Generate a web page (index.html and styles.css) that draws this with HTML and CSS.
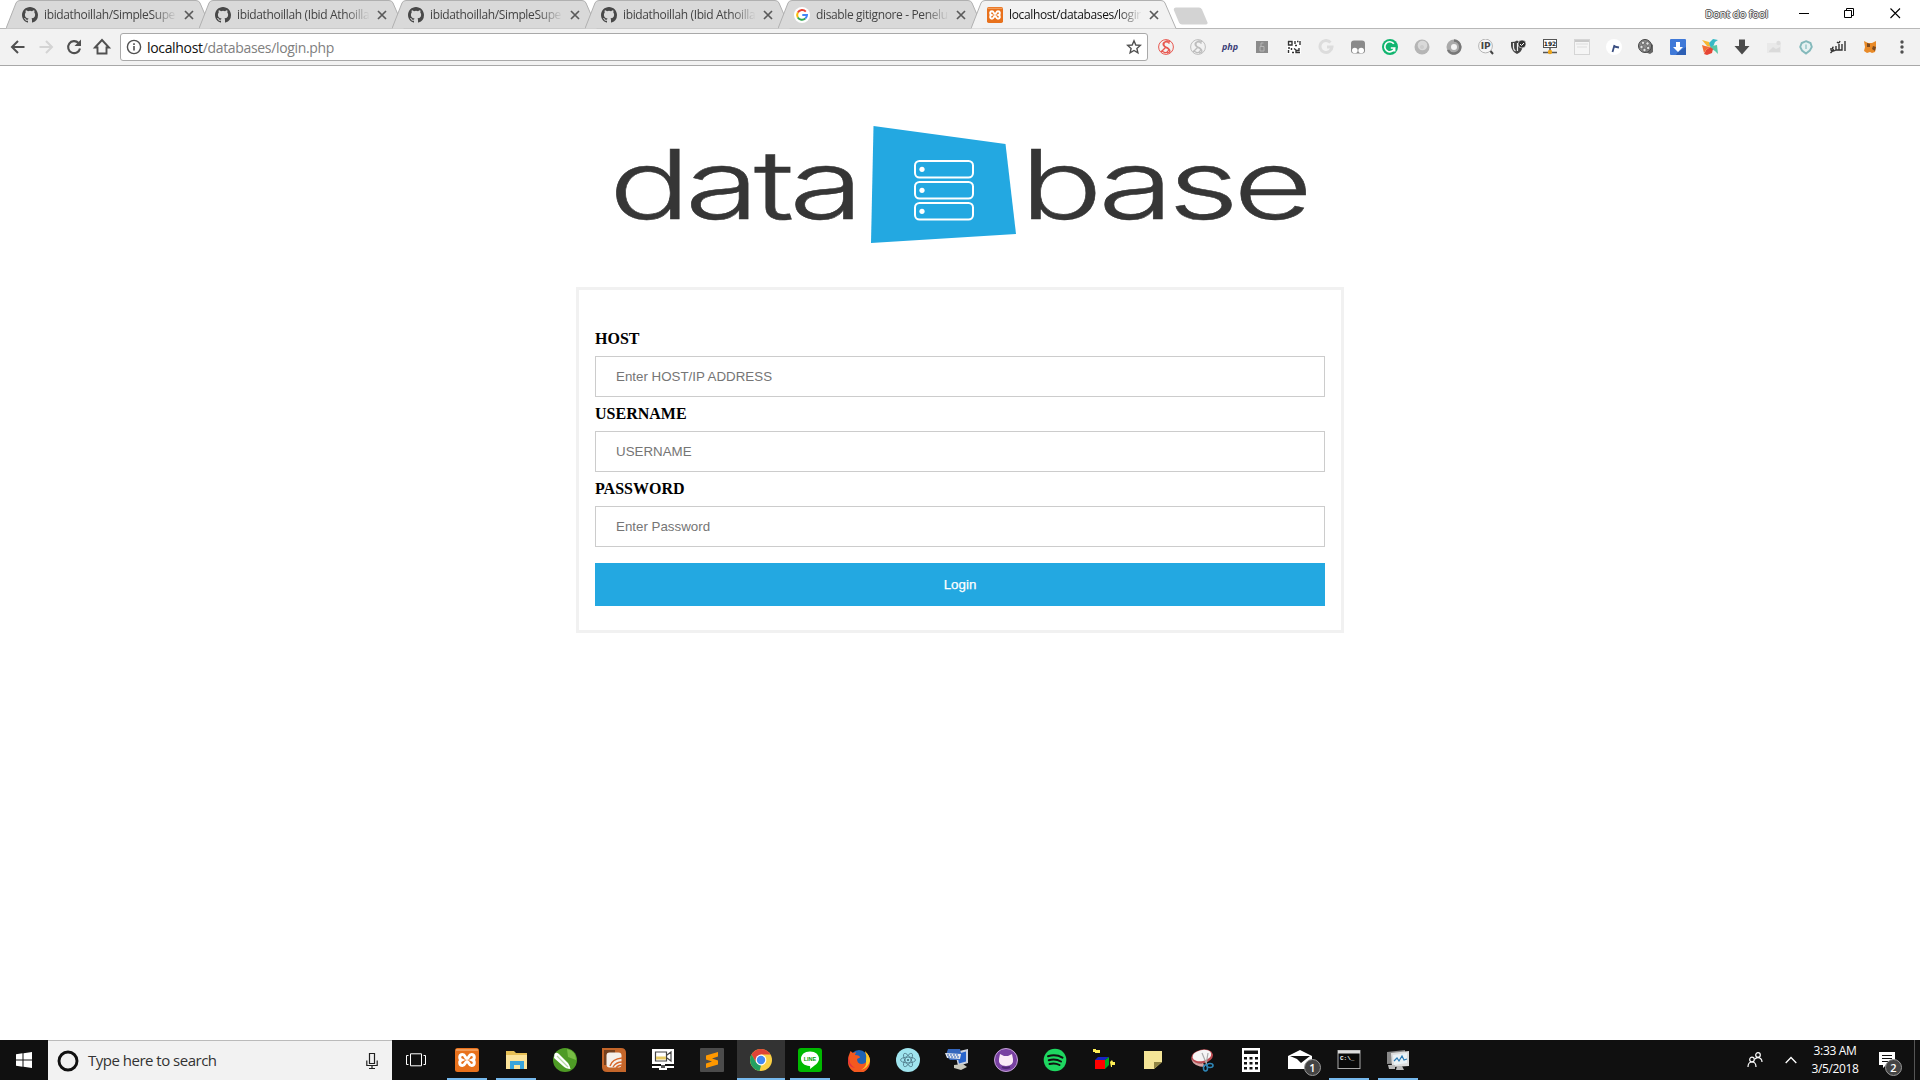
FILE: index.html
```html
<!DOCTYPE html>
<html lang="en">
<head>
<meta charset="utf-8">
<title>Database login</title>
<link rel="stylesheet" href="styles.css">
</head>
<body>
<svg class="defs" width="0" height="0">
  <symbol id="cat" viewBox="0 0 16 16"><path fill="#484848" fill-rule="evenodd" d="M8 0C3.58 0 0 3.58 0 8c0 3.54 2.29 6.53 5.47 7.59.4.07.55-.17.55-.38 0-.19-.01-.82-.01-1.49-2.01.37-2.53-.49-2.69-.94-.09-.23-.48-.94-.82-1.13-.28-.15-.68-.52-.01-.53.63-.01 1.08.58 1.23.82.72 1.21 1.87.87 2.33.66.07-.52.28-.87.51-1.07-1.78-.2-3.64-.89-3.64-3.95 0-.87.31-1.59.82-2.15-.08-.2-.36-1.02.08-2.12 0 0 .67-.21 2.2.82a7.6 7.6 0 0 1 4 0c1.53-1.04 2.2-.82 2.2-.82.44 1.1.16 1.92.08 2.12.51.56.82 1.27.82 2.15 0 3.07-1.87 3.75-3.65 3.95.29.25.54.73.54 1.48 0 1.07-.01 1.93-.01 2.2 0 .21.15.46.55.38A8 8 0 0 0 16 8c0-4.42-3.58-8-8-8z"/></symbol>
  <symbol id="tabshape" viewBox="0 0 207 29"><path d="M0 28.5 L10 3 Q11 .5 14 .5 H190 Q193 .5 194 3 L205 28.5"/></symbol>
  <symbol id="x" viewBox="0 0 10 10"><path d="M1 1L9 9M9 1L1 9" stroke="#5a5a5a" stroke-width="1.7"/></symbol>
  <symbol id="xampp" viewBox="0 0 24 24"><rect width="24" height="24" rx="2.5" fill="#e8711c"/><path d="M1 2h22" stroke="#f5a86a" stroke-width="1.5"/><path d="M7.5 6.5C4 6.5 4 11 6.5 12C4 13 4 17.5 7.5 17.5C10.5 17.5 10 13.500 12 13.500S13.500 17.500 16.500 17.500C20 17.500 20 13 17.500 12C20 11 20 6.500 16.500 6.500C13.500 6.500 14 10.500 12 10.500S10.500 6.500 7.500 6.500Z" fill="none" stroke="#fff" stroke-width="3"/></symbol>
  <symbol id="swirl" viewBox="0 0 16 16"><circle cx="8" cy="8" r="7.400" fill="none" stroke="currentColor"/><path d="M11.500 4.500C8 1 3 4 6 7s6 2 4 5-6 1-6-1M12 3C8-1 3 6 8 8s5 6 1 6M3 13L8 8" fill="none" stroke="currentColor" stroke-width="1.300"/></symbol>
</svg>

<header class="tabs">
  <div class="tab"><svg class="shape"><use href="#tabshape"/></svg><svg class="fav"><use href="#cat"/></svg><span class="title">ibidathoillah/SimpleSuper</span><svg class="close"><use href="#x"/></svg></div>
  <div class="tab"><svg class="shape"><use href="#tabshape"/></svg><svg class="fav"><use href="#cat"/></svg><span class="title">ibidathoillah (Ibid Athoillah)</span><svg class="close"><use href="#x"/></svg></div>
  <div class="tab"><svg class="shape"><use href="#tabshape"/></svg><svg class="fav"><use href="#cat"/></svg><span class="title">ibidathoillah/SimpleSuper</span><svg class="close"><use href="#x"/></svg></div>
  <div class="tab"><svg class="shape"><use href="#tabshape"/></svg><svg class="fav"><use href="#cat"/></svg><span class="title">ibidathoillah (Ibid Athoillah)</span><svg class="close"><use href="#x"/></svg></div>
  <div class="tab"><svg class="shape"><use href="#tabshape"/></svg><svg class="fav" viewBox="0 0 16 16"><circle cx="8" cy="8" r="8" fill="#fff"/><g fill="none" stroke-width="2"><path d="M11.800 4.600A5 5 0 0 0 3.800 5.600" stroke="#ea4335"/><path d="M3.800 5.600a5 5 0 0 0 0 4.800" stroke="#fbbc05"/><path d="M3.800 10.400a5 5 0 0 0 7.500 1.200" stroke="#34a853"/><path d="M11.300 11.600A5 5 0 0 0 13 8H8.300" stroke="#4285f4"/></g></svg><span class="title">disable gitignore - Penelu</span><svg class="close"><use href="#x"/></svg></div>
  <div class="tab active"><svg class="shape"><use href="#tabshape"/></svg><svg class="fav"><use href="#xampp"/></svg><span class="title">localhost/databases/login</span><svg class="close"><use href="#x"/></svg></div>
  <svg class="newtab" viewBox="0 0 36 18"><path d="M3 .5H26Q28 .5 29 2.500L34.500 15.500Q35 17.500 33 17.500H9Q7 17.500 6 15.500L.8 3Q.5 .5 3 .5Z" fill="#d3d3d3"/></svg>
  <span class="profile">Dont do fool</span>
  <svg class="wctl" viewBox="0 0 46 26"><path d="M18 13.500h10" stroke="#000"/></svg>
  <svg class="wctl" viewBox="0 0 46 26"><path d="M17.500 10.500h7v7h-7zM19.500 10.500v-2h7v7h-2" fill="none" stroke="#000"/></svg>
  <svg class="wctl" viewBox="0 0 46 26"><path d="M17.500 8.500l9.500 9.500M27 8.500l-9.500 9.500" stroke="#000" stroke-width="1.100"/></svg>
</header>

<nav class="toolbar">
  <svg class="nav" viewBox="0 0 28 28"><path d="M20.500 14H8.500M14 8L8 14l6 6" fill="none" stroke="#505050" stroke-width="2"/></svg>
  <svg class="nav" viewBox="0 0 28 28"><path d="M7.500 14h12M14 8l6 6-6 6" fill="none" stroke="#d4d4d4" stroke-width="2"/></svg>
  <svg class="nav" viewBox="0 0 28 28"><path d="M18.500 10A6 6 0 1 0 20 15.500" fill="none" stroke="#505050" stroke-width="2.100"/><path d="M21 6.500v6.500h-6.500z" fill="#505050"/></svg>
  <svg class="nav" viewBox="0 0 28 28"><path d="M7 14.500l7-7.500 7 7.500h-2.500v6h-9v-6z" fill="none" stroke="#505050" stroke-width="1.900"/></svg>
  <div class="omnibox">
    <svg class="info" viewBox="0 0 16 16"><circle cx="8" cy="8" r="6.600" fill="none" stroke="#505050" stroke-width="1.400"/><path d="M8 7v4.500M8 4.300v1.600" stroke="#505050" stroke-width="1.600"/></svg>
    <span class="url"><b>localhost</b>/databases/login.php</span>
    <svg class="star" viewBox="0 0 16 16"><path d="M8 1.800l1.800 4.200 4.500.4-3.400 3 1 4.400L8 11.500l-3.900 2.300 1-4.400-3.400-3L6.200 6z" fill="none" stroke="#505050" stroke-width="1.400"/></svg>
  </div>
  <div class="exts">
    <svg class="red" viewBox="0 0 16 16"><use href="#swirl"/></svg>
    <svg class="gray" viewBox="0 0 16 16"><use href="#swirl"/></svg>
    <span class="php">php</span>
    <svg viewBox="0 0 16 16"><rect x="2" y="2" width="12" height="12" fill="#8b8b8b"/><path d="M9.500 4H7v3M6 7.500h4v4.500H6z" stroke="#b5b5b5" fill="none"/></svg>
    <svg viewBox="0 0 16 16"><rect x="1" y="1" width="14" height="14" fill="#fff"/><path d="M2.500 2.500h3.500v3.500h-3.500zM9 2v3M11 2.500h1.500M14 2v4M9 6.500h2M2 9h2M5.500 9v2M2.500 11v3M6 13.500h2M8 9.500l2 1.500M13 9v2.500h-3v2h4" fill="none" stroke="#333" stroke-width="1.400"/></svg>
    <svg viewBox="0 0 16 16"><path d="M12.500 3.500A6 6 0 1 0 14 8H9" fill="none" stroke="#dcdcdc" stroke-width="3"/></svg>
    <svg viewBox="0 0 16 16"><rect x="1" y="1.500" width="14" height="13" rx="3" fill="#8a8a8a"/><circle cx="4.800" cy="11.500" r="2.800" fill="#fff"/><circle cx="11.200" cy="11.500" r="2.800" fill="#fff"/></svg>
    <svg viewBox="0 0 16 16"><circle cx="8" cy="8" r="8" fill="#11b56f"/><path d="M11.800 4.800A5 5 0 1 0 12.600 9H8.800M12.600 9v3.500" fill="none" stroke="#fff" stroke-width="1.700"/></svg>
    <svg viewBox="0 0 16 16"><circle cx="8" cy="8" r="7.500" fill="#b5b5b5"/><circle cx="8.500" cy="6.500" r="4.800" fill="#d9d9d9"/><circle cx="8" cy="8" r="2" fill="#ccc"/></svg>
    <svg viewBox="0 0 16 16"><circle cx="8" cy="8" r="7.500" fill="#aaa"/><path d="M8 1.500A6.500 6.500 0 1 1 2 11" stroke="#777" stroke-width="2.500" fill="none"/><circle cx="8" cy="8" r="3" fill="#f4f4f4"/></svg>
    <svg viewBox="0 0 16 16"><circle cx="7.500" cy="7" r="6.900" fill="#f6f6f6" stroke="#b5b5b5"/><text x="7.700" y="9.800" class="ip">IP</text><path d="M12.500 12l2.500 3" stroke="#444" stroke-width="2"/></svg>
    <svg viewBox="0 0 16 16"><path d="M1 3Q5 3 7 1.500Q9 3 12.500 3V8Q12 13 7 15Q1.500 12 1 7z" fill="#444"/><path d="M3.500 4v4.500q0 2.500 2 3.500M7.500 4v8" stroke="#eee" fill="none" stroke-width="1.200"/><circle cx="12" cy="5" r="4" fill="#333" stroke="#f2f2f2" stroke-width=".6"/><path d="M10 5l1.500 1.500L14 4" stroke="#fff" fill="none"/></svg>
    <svg viewBox="0 0 16 16"><rect x="1.500" y=".5" width="13" height="8" fill="#fff" stroke="#555"/><text x="8" y="7" class="num">192</text><path d="M8 9v4M1 13.500h14" stroke="#555" stroke-width="1.500"/><circle cx="8" cy="13" r="2.200" fill="#eda51b"/></svg>
    <svg viewBox="0 0 16 16"><rect x=".5" y=".5" width="15" height="15" fill="#f5f5f5" stroke="#d5d5d5"/><path d="M1 2h14" stroke="#c9c9c9" stroke-width="2"/><path d="M2 5h12M3 8h10" stroke="#ddd"/></svg>
    <svg viewBox="0 0 16 16"><circle cx="8" cy="8" r="8" fill="#fff"/><path d="M8.500 6L6.500 13M8 7.500l5 1" stroke="#3b4f82" stroke-width="1.800"/></svg>
    <svg viewBox="0 0 16 16"><path d="M9 1l6 5v7l-3 2-5-2z" fill="#666"/><circle cx="7" cy="7" r="6.500" fill="#8a8a8a" stroke="#444"/><g fill="#e2e2e2" stroke="#555" stroke-width=".7"><circle cx="5" cy="3.800" r="1.700"/><circle cx="9.500" cy="4.500" r="1.700"/><circle cx="3.500" cy="8" r="1.700"/><circle cx="6.500" cy="11" r="1.700"/><circle cx="10.200" cy="9" r="1.700"/></g></svg>
    <svg viewBox="0 0 16 16"><rect width="16" height="16" rx="1" fill="#3f79d8"/><path d="M8 13l8-5v8H6z" fill="#2d5fb4"/><path d="M6 3h4v5h3l-5 5-5-5h3z" fill="#fff"/></svg>
    <svg viewBox="0 0 16 16"><path d="M0 1l7 2 2 5-4-1z" fill="#f7b731"/><path d="M7 4l4-4 5 1-3 2-2 5-2 1z" fill="#36b9c6"/><path d="M10 7l5-1 1 9-3-3-5-3z" fill="#56c6a6"/><path d="M2 15l2-4 4-3 3 2-1 4-5 2z" fill="#e64535"/><path d="M0 6l3 1 5 1-4 3-2 3z" fill="#f26c34"/></svg>
    <svg viewBox="0 0 16 16"><path d="M5 .5h6V7h4.500L8 15.500.5 7H5z" fill="#4b4b4b"/></svg>
    <svg viewBox="0 0 16 16"><rect x="1" y="4" width="14" height="10" fill="#e9e9e9"/><path d="M3 12l4-4 3 2 4-2v5H3z" fill="#dadada"/><circle cx="12.500" cy="4" r="2.200" fill="#ddd"/></svg>
    <svg viewBox="0 0 16 16"><path d="M8 2.200l4.500 1.800 1.300 4-2 3.500L8 14.500l-4-3L2.200 8l1.500-4z" fill="#e6f2f2" stroke="#84b9bb" stroke-width="1.900"/><path d="M8 5.500v4.500" stroke="#73b2b4"/></svg>
    <svg viewBox="0 0 16 16"><path d="M15 2v10M12 5v6H9V5M9 11H6V7M6 11q-3 2-5 0V9M3.500 8q-2 1 0 3l-3 3M7 3q2 2 3-1" fill="none" stroke="#333" stroke-width="1.400"/></svg>
    <svg viewBox="0 0 16 16"><path d="M2 2l4 2h4l4-2v6l-1 5-3 1-2-1-3 1-3-2 1-4z" fill="#e88a28"/><path d="M5 4l3 1v3H5zM11 7l3 1-1 4-3-2z" fill="#7c4a20"/></svg>
    <svg viewBox="0 0 16 16"><g fill="#505050"><circle cx="8" cy="3" r="1.700"/><circle cx="8" cy="8" r="1.700"/><circle cx="8" cy="13" r="1.700"/></g></svg>
  </div>
</nav>

<main class="page">
  <svg class="logo" viewBox="0 0 704 120">
    <g class="word"><text x="1" y="95.500" textLength="249" lengthAdjust="spacingAndGlyphs">data</text><text x="412" y="95.500" textLength="287" lengthAdjust="spacingAndGlyphs">base</text></g>
    <path d="M265.500 3L397.500 21 408 111 263 120z" fill="#23a8e1"/>
    <g fill="none" stroke="#fff" stroke-width="2"><rect x="307" y="38" width="58" height="16.500" rx="4.500"/><rect x="307" y="59" width="58" height="16.500" rx="4.500"/><rect x="307" y="80" width="58" height="16.500" rx="4.500"/></g>
    <g fill="#fff"><circle cx="314" cy="46.300" r="2.600"/><circle cx="314" cy="67.300" r="2.600"/><circle cx="314" cy="88.300" r="2.600"/></g>
  </svg>
  <form class="login">
    <label for="host">HOST</label>
    <input id="host" type="text" placeholder="Enter HOST/IP ADDRESS">
    <label for="user">USERNAME</label>
    <input id="user" type="text" placeholder="USERNAME">
    <label for="pass">PASSWORD</label>
    <input id="pass" type="password" placeholder="Enter Password">
    <button type="button">Login</button>
  </form>
</main>

<footer class="taskbar">
  <div class="start"><svg width="16" height="16" viewBox="0 0 16 16"><path d="M0 2.200L6.500 1.300V7.500H0zM7.500 1.200L16 0V7.500H7.500zM0 8.500h6.500v6.200L0 13.800zM7.500 8.500H16V16L7.500 14.800z" fill="#fff"/></svg></div>
  <div class="search"><svg width="22" height="22" viewBox="0 0 22 22"><circle cx="11" cy="11" r="9" fill="none" stroke="#111" stroke-width="2.900"/></svg><span>Type here to search</span><svg class="mic" width="12" height="16" viewBox="0 0 12 16"><path d="M3.500.5h5v10h-5zM.8 7.500v5h10.400v-5M6 12.500v3M3 15.500h6" fill="none" stroke="#222" stroke-width="1.200"/></svg></div>
  <div class="view"><svg width="20" height="14" viewBox="0 0 20 14"><path d="M4.500.8h11v12h-11zM2.500 2.500h-2v9h2M17.500 2.500h2v9h-2" fill="none" stroke="#fff"/></svg></div>
  <div class="apps">
    <div class="app open"><svg viewBox="0 0 24 24"><use href="#xampp"/></svg></div>
    <div class="app open"><svg viewBox="0 0 24 24"><path d="M2 3h8l2 2h11v15H2z" fill="#e6bf55"/><path d="M2 7h21v14H2z" fill="#fbe39a"/><path d="M6 13h14v8h-4v-4h-6v4H6z" fill="#39a4dc"/></svg></div>
    <div class="app"><svg viewBox="0 0 24 24"><circle cx="12" cy="12" r="12" fill="#4e9b25"/><path d="M14 1q9 2 9 11l-8-3z" fill="#78bd45"/><path d="M1.500 6Q3 3.500 6 6l9 9q2 3 2.500 6Q13 21 10 18L1 10z" fill="#fff"/><path d="M4 8l11 11" stroke="#b6d9a2" stroke-width="1.200"/></svg></div>
    <div class="app"><svg viewBox="0 0 24 24"><path d="M0 0h19q5 0 5 5v19H5q-5 0-5-5z" fill="#c4662a"/><path d="M2 2h11v3H5v12H2z" fill="#75411f"/><rect x="4.500" y="4.500" width="15" height="15" rx="3" fill="#f4f0eb"/><path d="M8 18q2-7 12-8M11 19q3-5 9-5M14 20q2-3 6-3" fill="none" stroke="#d8682c" stroke-width="1.400"/></svg></div>
    <div class="app"><svg viewBox="0 0 24 24"><path d="M1 1h22v15H1zM10 16h4v4h-4zM8 20h8v2H8zM1 18h22v2H1z" fill="#fff"/><path d="M4.500 4h11v9h-11zM16 7l4-3v9l-4-3" fill="none" stroke="#444" stroke-width="1.200"/><path d="M5 10h10" stroke="#e7ca62" stroke-width="3"/><path d="M10 17h4v3h-4z" fill="#555"/></svg></div>
    <div class="app"><svg viewBox="0 0 24 24"><rect width="24" height="24" rx="1" fill="#4b4b4b"/><path d="M6 7.500L18 4v4.500l-6 2 6 2v4L6 20v-4.500l6-2-6-2z" fill="#ff9800"/></svg></div>
    <div class="app open current"><svg viewBox="0 0 24 24"><circle cx="12" cy="12" r="11" fill="#fbd044"/><path d="M2.500 6.500A11 11 0 0 1 21.500 6.500H12L7.200 14.700z" fill="#df4437"/><path d="M2.500 6.500L7.300 14.700 12 17.500l-1.500 5.400A11 11 0 0 1 2.500 6.500z" fill="#22a061"/><circle cx="12" cy="12" r="5.400" fill="#fff"/><circle cx="12" cy="12" r="4.200" fill="#4489f3"/></svg></div>
    <div class="app open"><svg viewBox="0 0 24 24"><rect width="24" height="24" rx="3" fill="#00b900"/><path d="M12 3.500c5.500 0 9 3.200 9 7.300 0 4-4.500 7-9 10.200.3-1.500.5-2.700-.5-2.900C6.500 17.700 3 15 3 10.800 3 6.700 6.500 3.500 12 3.500z" fill="#fff"/><text x="12" y="13.200" class="line">LINE</text></svg></div>
    <div class="app"><svg viewBox="0 0 24 24"><circle cx="12" cy="11" r="9" fill="#1f63b5"/><path d="M2 7l1.500-4L6 5l3-1-1 3q5 0 5 2.500l-3 1.500q0 5 5 5 6-1 5-8l-2-4q5.500 3.500 5 10a11 11 0 0 1-22 0Q1 9 2 7z" fill="#f4591f"/><path d="M18 3q5 5 5 10-2 7-9 9 6-3 5-9 1-5-1-10z" fill="#ffc928"/><path d="M2 7q-1 9 6 13-6-1-7-7z" fill="#e3313f"/></svg></div>
    <div class="app"><svg viewBox="0 0 24 24"><circle cx="12" cy="12" r="12" fill="#9fe4ee"/><g fill="none" stroke="#4c7787" stroke-width=".8"><ellipse cx="12" cy="12" rx="7.500" ry="2.900"/><ellipse cx="12" cy="12" rx="7.500" ry="2.900" transform="rotate(60 12 12)"/><ellipse cx="12" cy="12" rx="7.500" ry="2.900" transform="rotate(120 12 12)"/></g><circle cx="12" cy="12" r="1" fill="#3d6474"/></svg></div>
    <div class="app"><svg viewBox="0 0 24 24"><path d="M10 4l13-3v14l-10 3z" fill="#cdd3df"/><path d="M12 6l9-2.500v10l-7 2z" fill="#2864cc"/><path d="M3 1h12l1 4-1 7H5L1 7z" fill="#3567bd"/><path d="M0 5l16 1-1 5-13-1z" fill="#e5e8ee"/><path d="M2 7h12M3 9h11" stroke="#285db7" stroke-dasharray="2 1"/><path d="M9 17l9-1 4 3-6 3-7-2z" fill="#c8c8bd"/></svg></div>
    <div class="app"><svg viewBox="0 0 24 24"><circle cx="12" cy="12" r="11.500" fill="#7941a2" stroke="#c6a3d9"/><path d="M6 6l4 2h4l4-2 1 5q1 7-7 7T5 11z" fill="#fbeaf7"/><path d="M8 19q4 2 8 0" stroke="#4f2673" stroke-width="2" fill="none"/></svg></div>
    <div class="app"><svg viewBox="0 0 24 24"><circle cx="12" cy="12" r="11.300" fill="#1ed760"/><path d="M5 8.200Q13 6 19.500 9.600M5.800 12.200Q12.500 10.300 18 13.500M6.500 16Q12 14.500 16.500 17" fill="none" stroke="#111" stroke-width="2" stroke-linecap="round"/></svg></div>
    <div class="app"><svg viewBox="0 0 24 24"><path d="M3 12h10v9H3z" fill="#f00"/><path d="M3 12l3-3h11l-4 3z" fill="#1724c2"/><path d="M13 12l4-3v8l-4 4z" fill="#00aa24"/><path d="M1 1h3v1h4v3H3V4H1zM18 14l2-2 1 2h2v3h-3v2h-1z" fill="#ffef55"/></svg></div>
    <div class="app"><svg viewBox="0 0 24 24"><path d="M3 3h18v11l-8 7H3z" fill="#f4e597"/><path d="M13 14h8l-8 7z" fill="#908443"/></svg></div>
    <div class="app"><svg viewBox="0 0 24 24"><ellipse cx="12" cy="8.500" rx="11" ry="7" fill="#bc4b51" transform="rotate(-12 12 8)"/><ellipse cx="12" cy="7.500" rx="9.500" ry="5.500" fill="#f5f5f5" transform="rotate(-12 12 8)"/><path d="M1 11q6 6 12 4l2 4q-11 0-14-8z" fill="#d7a5a5"/><path d="M12 5l5 12M18 5l-2 12" stroke="#aaa" stroke-width="1.200"/><g fill="none" stroke="#2e87b8" stroke-width="1.600"><ellipse cx="15.500" cy="20" rx="2" ry="3"/><ellipse cx="20" cy="17.500" rx="3" ry="2"/></g></svg></div>
    <div class="app"><svg viewBox="0 0 24 24"><path d="M3 0h18v24H3z" fill="#fff"/><path d="M5 2.500h14v3.500H5zM5 9h3v2.500H5zM10.500 9h3v2.500h-3zM16 9h3v2.500h-3zM5 14h3v2.500H5zM10.500 14h3v2.500h-3zM16 14h3v2.500h-3zM5 19h3v2.500H5zM10.500 19h3v2.500h-3zM16 19h3v2.500h-3z" fill="#111"/></svg></div>
    <div class="app"><svg viewBox="0 0 24 24"><path d="M0 8l12-6 12 6v13H0z" fill="#fff"/><path d="M2 8h20l-9 7-4-4z" fill="#111"/></svg><span class="badge">1</span></div>
    <div class="app open"><svg viewBox="0 0 24 24"><rect x="1" y="2.500" width="22" height="18" fill="#090909" stroke="#aaa"/><path d="M1 4h22" stroke="#ddd" stroke-width="3"/><text x="3" y="11.500" class="cmd">C:\_</text></svg></div>
    <div class="app open"><svg viewBox="0 0 24 24"><path d="M1 4l18-2v13l-18 1z" fill="#888"/><path d="M5 5l18-2v15l-17 1z" fill="#ddd"/><path d="M7 7l14-2v10L8 17z" fill="#eaf2f6"/><path d="M8 13l3-3 2 3 3-5 2 4 3-1" fill="none" stroke="#2878b3" stroke-width="1.200"/><path d="M2 17h7v4H3zM11 18h5l2 4h-8z" fill="#b9b9b9"/></svg></div>
  </div>
  <svg class="people" width="16" height="16" viewBox="0 0 16 16"><g fill="none" stroke="#fff" stroke-width="1.200"><circle cx="5" cy="7.500" r="2.300"/><path d="M1 15q0-5 4-5t4 5"/><circle cx="11" cy="3" r="2.300"/><path d="M8 7q3-3 6 0 1 1 1 3"/></g></svg>
  <svg class="chev" width="12" height="8" viewBox="0 0 12 8"><path d="M.7 7L6 1.500 11.300 7" fill="none" stroke="#fff" stroke-width="1.300"/></svg>
  <div class="clock"><span>3:33 AM</span><span>3/5/2018</span></div>
  <div class="notes"><svg width="18" height="17" viewBox="0 0 18 17"><path d="M1 0h16v13H8l-3 3v-3H1z" fill="#fff"/><path d="M4 3.500h10M4 6.500h10M4 9.500h8" stroke="#111"/></svg><span class="badge">2</span></div>
</footer>
</body>
</html>
```
FILE: styles.css
```css
* { box-sizing: border-box; }
body {
  margin: 0;
  width: 1920px;
  height: 1080px;
  overflow: hidden;
  display: flex;
  flex-direction: column;
  background: #fff;
  font-family: "Open Sans", "Noto Sans", sans-serif;
}
svg { display: block; flex: none; }
.defs { position: absolute; }

/* tab strip */
.tabs {
  height: 28px;
  padding-left: 6px;
  display: flex;
  position: relative;
}
.tab {
  position: relative;
  width: 193px;
  height: 28px;
  flex: none;
  display: flex;
  align-items: center;
  padding: 2px 0 0 16px;
}
.shape {
  position: absolute;
  left: 0;
  top: 0;
  width: 207px;
  height: 29px;
  fill: #d9d9d9;
  stroke: #b0b0b0;
}
.active .shape { fill: #f2f2f2; }
.active { z-index: 2; }
.fav, .title, .close { position: relative; }
.fav { width: 16px; height: 16px; }
.title {
  width: 132px;
  margin-left: 6px;
  overflow: hidden;
  white-space: nowrap;
  font-size: 12px;
  letter-spacing: -0.36px;
  line-height: 18px;
  color: #444;
  -webkit-mask-image: linear-gradient(90deg, #000 108px, transparent 133px);
  mask-image: linear-gradient(90deg, #000 108px, transparent 133px);
}
.active .title { color: #111; }
.close { width: 10px; height: 10px; margin-left: 8px; }
.newtab { width: 36px; height: 18px; margin: 7px 0 0 9px; }
.profile {
  margin: 6px 13px 0 auto;
  font-size: 11px;
  line-height: 16px;
  letter-spacing: -0.1px;
  color: #fff;
  text-shadow: 1px 0 #555, -1px 0 #555, 0 1px #555, 0 -1px #555;
}
.wctl { width: 46px; height: 26px; }
.wctl:last-child { margin-right: 1px; }

/* toolbar */
.toolbar {
  height: 38px;
  display: flex;
  align-items: center;
  padding-left: 4px;
  background: #f2f2f2;
  border-top: 1px solid #b8b8b8;
  border-bottom: 1px solid #a8a8a8;
}
.nav { width: 28px; height: 28px; }
.omnibox {
  width: 1028px;
  height: 28px;
  margin-left: 4px;
  padding: 0 5px;
  display: flex;
  align-items: center;
  background: #fff;
  border: 1px solid #a9a9a9;
  border-radius: 3px;
}
.info { width: 16px; height: 16px; }
.url {
  flex: 1;
  margin-left: 5px;
  padding-top: 1px;
  font-size: 14px;
  line-height: 20px;
  letter-spacing: -0.33px;
  color: #808080;
}
.url b { font-weight: 400; color: #111; }
.star { width: 16px; height: 16px; }
.exts {
  display: flex;
  gap: 16px;
  margin-left: 10px;
  align-items: center;
}
.exts svg { width: 16px; height: 16px; }
.red { color: #e8574f; }
.gray { color: #bdbdbd; }
.php {
  width: 16px;
  display: flex;
  justify-content: center;
  font: italic 700 9px/12px "Open Sans", sans-serif;
  color: #3c3f78;
}
.ip { font: 700 9px "DejaVu Sans", sans-serif; text-anchor: middle; fill: #444; }
.num { font: 700 6px "DejaVu Sans", sans-serif; text-anchor: middle; fill: #222; }

/* page */
.page { flex: 1; }
.logo { width: 704px; height: 120px; margin: 57px auto 0 608px; overflow: visible; }
.word text {
  font: 300 96px "Inter", sans-serif;
  letter-spacing: -4px;
  fill: #363636;
  stroke: #363636;
  stroke-width: .5px;
}
.login {
  width: 768px;
  height: 346px;
  margin: 44px auto 0;
  padding: 40px 16px 24px;
  border: 3px solid #f1f1f1;
}
.login label {
  display: block;
  font: 700 16px/18px "Liberation Serif", serif;
  color: #000;
}
.login input {
  display: block;
  width: 100%;
  height: 41px;
  margin: 8px 0;
  padding: 12px 20px;
  border: 1px solid #ccc;
  border-radius: 0;
  font: 13.333px "Liberation Sans", sans-serif;
}
.login input::placeholder { color: #757575; }
.login button {
  display: block;
  width: 100%;
  height: 43px;
  margin-top: 16px;
  border: 0;
  background: #23a8e1;
  color: #fff;
  font: 13.333px "Liberation Sans", sans-serif;
  -webkit-text-stroke: .25px #fff;
}

/* taskbar */
.taskbar {
  height: 40px;
  display: flex;
  align-items: center;
  background: #101010;
  color: #fff;
}
.start, .view {
  width: 48px;
  display: flex;
  justify-content: center;
}
.search {
  width: 344px;
  height: 40px;
  padding: 0 14px 0 9px;
  display: flex;
  align-items: center;
  background: #f2f2f2;
  border-top: 1px solid #bbb;
}
.search span {
  flex: 1;
  margin-left: 9px;
  padding-bottom: 1px;
  font-size: 15px;
  letter-spacing: -0.5px;
  color: #333;
}
.apps { display: flex; gap: 1px; margin-left: 3px; }
.app {
  position: relative;
  width: 48px;
  height: 40px;
  display: flex;
  align-items: center;
  justify-content: center;
}
.app > svg { width: 24px; height: 24px; }
.open::after {
  content: "";
  position: absolute;
  left: 4px;
  right: 4px;
  bottom: 0;
  height: 2px;
  background: #76b9ed;
}
.current { background: #333; }
.current::after { left: 0; right: 0; }
.badge {
  position: absolute;
  left: 28px;
  top: 19px;
  width: 17px;
  height: 17px;
  border: 1px solid #999;
  border-radius: 50%;
  background: #444;
  font-size: 11px;
  font-weight: 600;
  line-height: 15px;
  text-align: center;
}
.line { font: 700 5.500px "Liberation Sans", sans-serif; text-anchor: middle; fill: #00a000; }
.cmd { font: 700 6px "Liberation Mono", monospace; fill: #fff; }
.people { margin-left: auto; }
.chev { margin-left: 22px; }
.clock {
  width: 54px;
  margin-left: 11px;
  display: flex;
  flex-direction: column;
  align-items: center;
  font-size: 12px;
  line-height: 18px;
  letter-spacing: -0.35px;
  white-space: nowrap;
}
.notes {
  position: relative;
  width: 37px;
  height: 40px;
  margin: 0 5px 0 16px;
  padding-top: 12px;
  border-right: 1px solid #555;
}
.notes .badge { left: 7px; top: 19px; }
```
